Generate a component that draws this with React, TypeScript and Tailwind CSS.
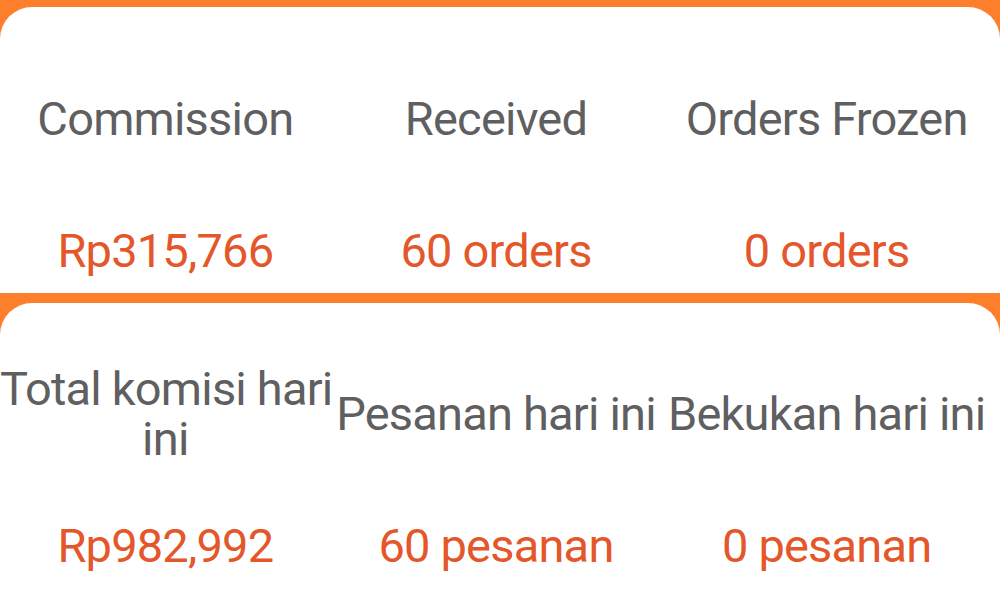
const font = { fontFamily: "Roboto, 'Noto Sans', sans-serif" };

function StatRow({ items, className }: { items: React.ReactNode[]; className: string }) {
  return (
    <div className={"grid grid-cols-3 items-center pr-[8px] " + className}>
      {items.map((t, i) => (
        <div key={i} className="text-center whitespace-nowrap">
          {t}
        </div>
      ))}
    </div>
  );
}

function Card({
  labels,
  values,
  top,
  gap,
  height,
}: {
  labels: React.ReactNode[];
  values: string[];
  top: string;
  gap: string;
  height: string;
}) {
  return (
    <div className={"bg-white rounded-t-[32px] " + height + " " + top}>
      <StatRow items={labels} className="text-[#5f5f61]" />
      <StatRow items={values} className={"text-[#e4572a] " + gap} />
    </div>
  );
}

export default function App() {
  return (
    <div
      className="w-[1000px] h-[600px] overflow-hidden bg-[#fd7f2c] pt-[7px] flex flex-col gap-[10px] text-[47px] leading-[50px] tracking-[-0.8px]"
      style={font}
    >
      <Card
        labels={["Commission", "Received", "Orders Frozen"]}
        values={["Rp315,766", "60 orders", "0 orders"]}
        top="pt-[87px]"
        gap="mt-[82px]"
        height="h-[286px] shrink-0"
      />
      <Card
        labels={[
          <>
            Total komisi hari
            <br />
            ini
          </>,
          "Pesanan hari ini",
          "Bekukan hari ini",
        ]}
        values={["Rp982,992", "60 pesanan", "0 pesanan"]}
        top="pt-[61px]"
        gap="mt-[57px]"
        height="flex-1"
      />
    </div>
  );
}
